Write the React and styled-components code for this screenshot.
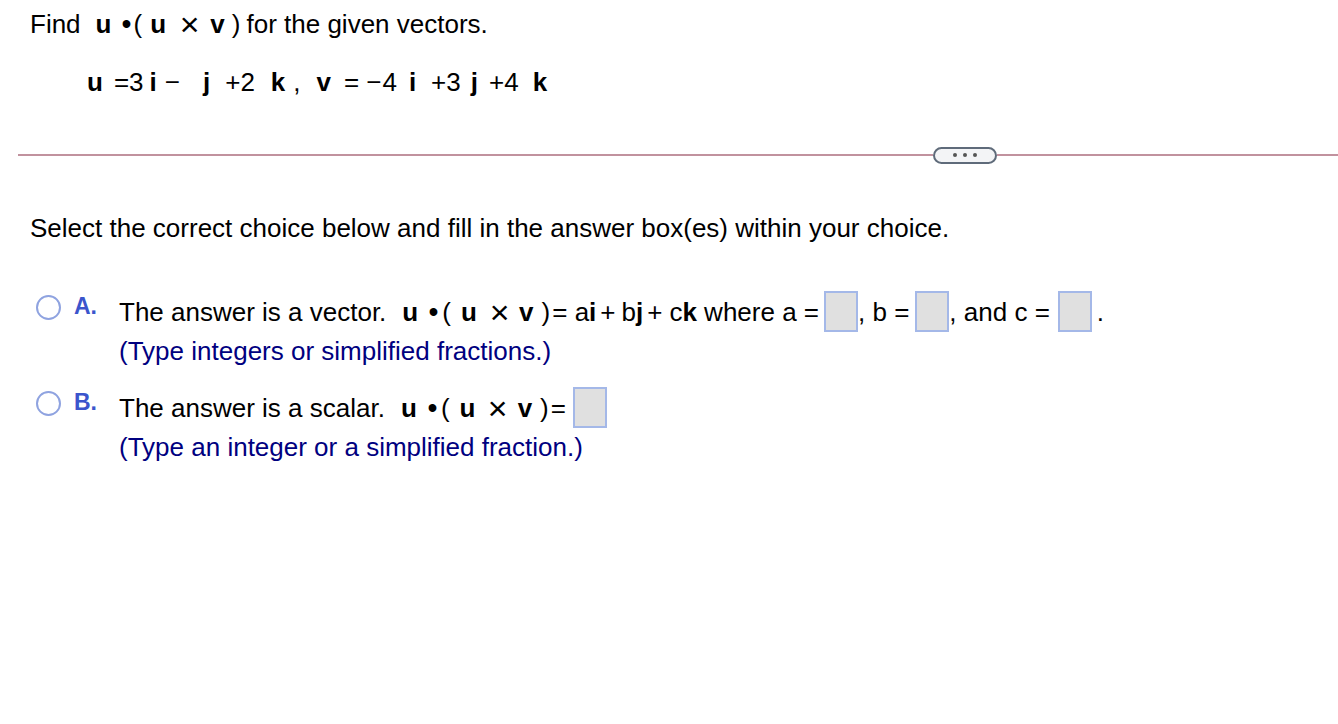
import styled, { createGlobalStyle } from "styled-components";

const GlobalStyle = createGlobalStyle`
  body {
    margin: 0;
    background: #fff;
    font-family: "Liberation Sans", Arial, Helvetica, sans-serif;
    color: #000;
  }
`;

const Page = styled.div`
  width: 1338px;
  padding-top: 9px;
  font-size: 26px;
`;

const Question = styled.div`
  padding-left: 30px;
  line-height: 30px;
  display: flex;
  align-items: baseline;
  white-space: pre;
`;

const Equation = styled.div`
  margin-top: 28px;
  padding-left: 87px;
  line-height: 30px;
  display: flex;
  align-items: baseline;
  white-space: pre;
`;

const Tok = styled.span`
  margin-left: ${(p) => p.l || 0}px;
  font-weight: ${(p) => (p.b ? 700 : 400)};
`;

/* operator glyph drawn a bit larger than the text, without changing layout */
const Op = styled.span`
  display: inline-block;
  margin-left: ${(p) => p.l || 0}px;
  transform: scale(${(p) => p.k || 1});
`;

const DividerRow = styled.div`
  display: flex;
  align-items: center;
  margin: 49px 0 0 18px;
  height: 18px;
`;

const Line = styled.div`
  height: 2px;
  background: #c1929e;
  flex: ${(p) => (p.grow ? 1 : "none")};
  width: ${(p) => p.w || 0}px;
`;

const Pill = styled.div`
  width: 60px;
  height: 13px;
  border: 2px solid #5f6b7a;
  border-radius: 9px;
  background: #f3f4f6;
  display: flex;
  align-items: center;
  justify-content: center;
  gap: 6px;
`;

const Dot = styled.span`
  width: 4px;
  height: 4px;
  border-radius: 50%;
  background: #555;
`;

const Instruction = styled.div`
  margin-top: 49px;
  padding-left: 30px;
  line-height: 30px;
`;

const Choices = styled.div`
  margin-top: 48px;
  padding-left: 36px;
  display: flex;
  flex-direction: column;
  gap: 21px;
`;

const Choice = styled.div`
  display: flex;
  align-items: flex-start;
`;

const Radio = styled.span`
  width: 25px;
  height: 25px;
  border: 2px solid #8fa3e0;
  border-radius: 50%;
  box-sizing: border-box;
  margin-top: 4px;
  flex: none;
`;

const Letter = styled.span`
  width: 45px;
  padding-left: 13px;
  color: #3b55cc;
  font-weight: 700;
  font-size: 23px;
  line-height: 30px;
  flex: none;
`;

const Body = styled.div`
  line-height: 30px;
`;

const MainLine = styled.div`
  display: flex;
  align-items: center;
  height: 41px;
  white-space: pre;
`;

const Hint = styled.div`
  color: #000080;
  margin-top: 4px;
`;

const Box = styled.span`
  display: inline-block;
  width: 30px;
  height: 37px;
  border: 2px solid #a4b8e8;
  background: #e0e0e0;
  margin: 0 ${(p) => p.mr || 0}px 0 ${(p) => p.ml || 0}px;
`;

function UdotUxV({ g }) {
  return (
    <>
      <Tok b l={g[0]}>u</Tok>
      <Op l={g[1]} k={1.1}>•</Op>
      <Tok l={g[2]}>(</Tok>
      <Tok b l={g[3]}>u</Tok>
      <Op l={g[4]} k={1.3}>×</Op>
      <Tok b l={g[5]}>v</Tok>
      <Tok l={g[6]}>)</Tok>
    </>
  );
}

const eq = [
  ["u", 1, 0],
  ["=", 0, 11],
  ["3", 0, 0],
  ["i", 1, 6],
  ["−", 0, 8],
  ["j", 1, 23],
  ["+", 0, 15],
  ["2", 0, 0],
  ["k", 1, 16],
  [",", 0, 8],
  ["v", 1, 16],
  ["=", 0, 13],
  ["−", 0, 7],
  ["4", 0, 1],
  ["i", 1, 12],
  ["+", 0, 15],
  ["3", 0, 0],
  ["j", 1, 10],
  ["+", 0, 11],
  ["4", 0, 0],
  ["k", 1, 14],
];

const optGaps = [16, 11, 4, 10, 15, 12, 8];

export default function App() {
  return (
    <Page>
      <GlobalStyle />
      <Question>
        Find
        <UdotUxV g={[15, 11, 2, 8, 16, 13, 7]} />
        <Tok l={6}>for the given vectors.</Tok>
      </Question>
      <Equation>
        {eq.map(([t, b, l], i) => (
          <Tok key={i} b={b} l={l}>
            {t}
          </Tok>
        ))}
      </Equation>
      <DividerRow>
        <Line w={915} />
        <Pill>
          <Dot />
          <Dot />
          <Dot />
        </Pill>
        <Line grow />
      </DividerRow>
      <Instruction>Select the correct choice below and fill in the answer box(es) within your choice.</Instruction>
      <Choices>
        <Choice>
          <Radio />
          <Letter>A.</Letter>
          <Body>
            <MainLine>
              The answer is a vector.
              <UdotUxV g={optGaps} />
              <Tok l={2}>= a</Tok>
              <Tok b>i</Tok>
              <Tok l={4}>+</Tok>
              <Tok l={6}>b</Tok>
              <Tok b>j</Tok>
              <Tok l={4}>+</Tok>
              <Tok l={7}>c</Tok>
              <Tok b>k</Tok> where a =
              <Box ml={5} />, b =
              <Box ml={6} />, and c =
              <Box ml={8} mr={5} />.
            </MainLine>
            <Hint>(Type integers or simplified fractions.)</Hint>
          </Body>
        </Choice>
        <Choice>
          <Radio />
          <Letter>B.</Letter>
          <Body>
            <MainLine>
              The answer is a scalar.
              <UdotUxV g={optGaps} />
              <Tok l={2}>=</Tok>
              <Box ml={7} />
            </MainLine>
            <Hint>(Type an integer or a simplified fraction.)</Hint>
          </Body>
        </Choice>
      </Choices>
    </Page>
  );
}
